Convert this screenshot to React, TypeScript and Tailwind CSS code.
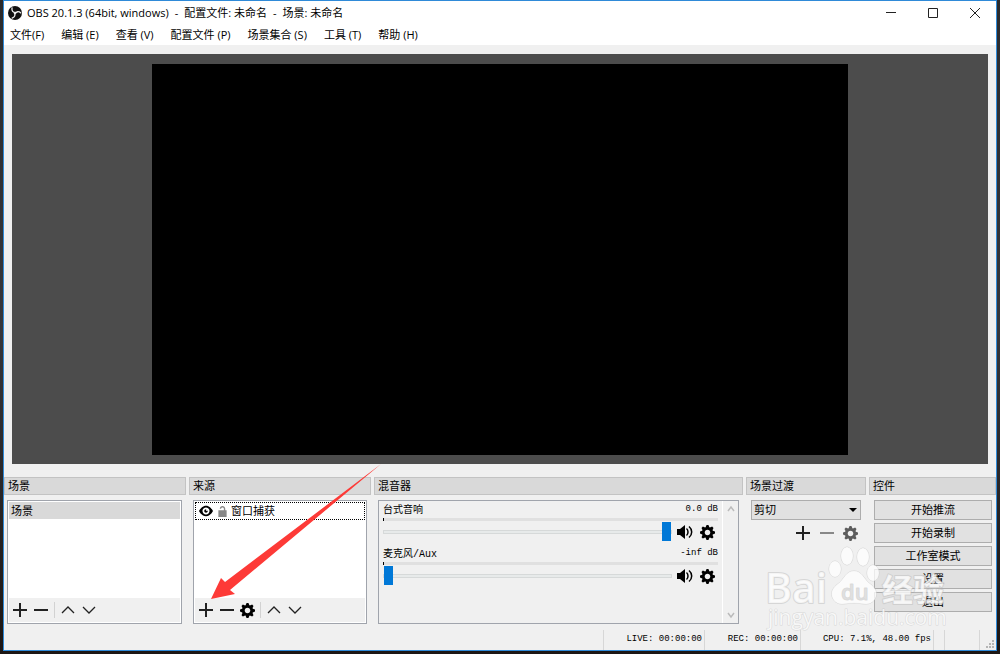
import type { ReactNode } from 'react';

const GLYPHS = {
  cog: 'M3.5 0l-.5 1.19c-.1.03-.19.08-.28.13l-1.19-.5-.72.72.5 1.19c-.05.1-.09.18-.13.28l-1.19.5v1l1.19.5c.04.1.08.18.13.28l-.5 1.19.72.72 1.19-.5c.09.04.18.09.28.13l.5 1.19h1l.5-1.19c.09-.04.19-.08.28-.13l1.19.5.72-.72-.5-1.19c.04-.09.09-.19.13-.28l1.19-.5v-1l-1.19-.5c-.03-.09-.08-.19-.13-.28l.5-1.19-.72-.72-1.19.5c-.09-.04-.19-.09-.28-.13l-.5-1.19h-1zm.5 2.5c.83 0 1.5.67 1.5 1.5s-.67 1.5-1.5 1.5-1.5-.67-1.5-1.5.67-1.5 1.5-1.5z',
  eye: 'M4.03 1c-2.53 0-4.03 3-4.03 3s1.5 3 4.03 3c2.47 0 3.97-3 3.97-3s-1.5-3-3.97-3zm-.03 1c1.11 0 2 .9 2 2 0 1.11-.89 2-2 2-1.1 0-2-.89-2-2 0-1.1.9-2 2-2zm0 1c-.55 0-1 .45-1 1s.45 1 1 1 1-.45 1-1c0-.1-.04-.19-.06-.28-.08.16-.24.28-.44.28-.28 0-.5-.22-.5-.5 0-.2.12-.36.28-.44-.09-.03-.18-.06-.28-.06z',
  unlock: 'M4 0c-1.1 0-2 .9-2 2h1c0-.56.44-1 1-1s1 .44 1 1v1h-4v5h6v-5h-1v-1c0-1.1-.9-2-2-2z',
};

const LINES = {
  plus: 'M8 1v14M1 8h14',
  minus: 'M1 8h14',
  up: 'M2 11l6-6 6 6',
  down: 'M2 5l6 6 6-6',
};

const Glyph = ({ name, className = 'size-[15px]' }: { name: keyof typeof GLYPHS; className?: string }) => (
  <svg viewBox="0 0 8 8" fill="currentColor" className={className}>
    <path d={GLYPHS[name]} />
  </svg>
);

const Line = ({ name, width = 2 }: { name: keyof typeof LINES; width?: number }) => (
  <svg viewBox="0 0 16 16" fill="none" stroke="currentColor" strokeWidth={width} className="size-4">
    <path d={LINES[name]} />
  </svg>
);

const Speaker = () => (
  <svg viewBox="0 0 16 16" fill="none" stroke="currentColor" strokeWidth="1.5" className="size-4">
    <path d="M0 5h3l5-4v14l-5-4H0z" fill="currentColor" stroke="none" />
    <path d="M9.5 4.5c2 1.5 2 5.500 0 7M12 2.500c3.600 3 3.600 8 0 11" />
  </svg>
);

type IconButtonProps = {
  label: string;
  children: ReactNode;
  className?: string;
};

const IconButton = ({ label, children, className = '' }: IconButtonProps) => (
  <button type="button" aria-label={label} className={`flex items-center justify-center ${className}`}>
    {children}
  </button>
);

const ObsLogo = () => (
  <svg viewBox="0 0 28 28" className="size-[14px]">
    <circle cx="14" cy="14" r="14" fill="#111" />
    <g fill="none" stroke="#f2f2f2" strokeWidth="2.600" strokeLinecap="round">
      <path d="M8 4c-1 6 2 9 7 9" />
      <path d="M8 4c-1 6 2 9 7 9" transform="rotate(120 14 14)" />
      <path d="M8 4c-1 6 2 9 7 9" transform="rotate(240 14 14)" />
    </g>
  </svg>
);

const TitleBar = () => (
  <header className="flex h-6 items-center bg-white pl-1">
    <ObsLogo />
    <h1 className="flex flex-1 gap-[6px] pl-[5px] text-[11px] whitespace-nowrap">
      <span>OBS 20.1.3 (64bit, windows)</span>
      <span>-</span>
      <span>配置文件: 未命名</span>
      <span>-</span>
      <span>场景: 未命名</span>
    </h1>
    <div className="flex text-[#222]">
      <IconButton label="最小化" className="h-6 w-[42px]">
        <svg viewBox="0 0 10 10" stroke="currentColor" className="size-[10px]">
          <path d="M0 4.5h10" />
        </svg>
      </IconButton>
      <IconButton label="最大化" className="h-6 w-[42px]">
        <svg viewBox="0 0 10 10" fill="none" stroke="currentColor" className="size-[10px]">
          <path d="M.5.5h9v9h-9z" />
        </svg>
      </IconButton>
      <IconButton label="关闭" className="h-6 w-[42px]">
        <svg viewBox="0 0 10 10" fill="none" stroke="currentColor" className="size-[10px]">
          <path d="M0 0l10 10M10 0L0 10" />
        </svg>
      </IconButton>
    </div>
  </header>
);

const MENUS = ['文件(F)', '编辑 (E)', '查看 (V)', '配置文件 (P)', '场景集合 (S)', '工具 (T)', '帮助 (H)'];

const MenuBar = () => (
  <nav className="flex h-5 items-center gap-[17px] bg-white pl-[6px] text-[11px]">
    {MENUS.map((item) => (
      <button key={item} type="button" className="whitespace-nowrap">
        {item}
      </button>
    ))}
  </nav>
);

type DockProps = {
  title: string;
  children: ReactNode;
  bodyClass?: string;
};

const Dock = ({ title, children, bodyClass = 'px-1' }: DockProps) => (
  <section className="relative flex min-w-0 flex-col">
    <h2 className="h-[18px] border border-[#c3c3c3] bg-[#d9d9d9] pl-[3px] text-[11px] leading-4">{title}</h2>
    <div className={`mt-[5px] flex-1 ${bodyClass}`}>{children}</div>
  </section>
);

type ListBoxProps = {
  children: ReactNode;
  settings?: boolean;
};

const ListBox = ({ children, settings = false }: ListBoxProps) => (
  <div className="flex h-[124px] flex-col border border-[#a0a4ac] bg-white p-px">
    <ul className="flex-1">{children}</ul>
    <div className="flex h-6 items-center gap-[5px] bg-[#f0f0f0] pl-[3px] text-[#222]">
      <IconButton label="添加"><Line name="plus" /></IconButton>
      <IconButton label="移除"><Line name="minus" /></IconButton>
      {settings && <IconButton label="属性" className="text-black"><Glyph name="cog" /></IconButton>}
      <span className="h-4 w-px bg-[#d2d2d2]" />
      <IconButton label="上移"><Line name="up" width={1.3} /></IconButton>
      <IconButton label="下移"><Line name="down" width={1.3} /></IconButton>
    </div>
  </div>
);

// long tapered pointer that ends on the "add source" button
const Arrow = () => (
  <svg viewBox="0 0 170 136" className="pointer-events-none absolute top-[-13px] left-[22px] z-10 h-[136px] w-[170px]">
    <path d="M0 135L10 114l4 4L170 0 19 126l5 4z" fill="#fd3a37" />
  </svg>
);

type ChannelProps = {
  id: string;
  name: string;
  level: string;
  value: number;
};

const Channel = ({ id, name, level, value }: ChannelProps) => (
  <div className="h-11">
    <div className="flex h-4 items-center justify-between">
      <label htmlFor={id} className="font-['Liberation_Mono','Noto_Sans_CJK_SC',monospace] text-[10px]">{name}</label>
      <output htmlFor={id} className="font-['Liberation_Mono',monospace] text-[9px]">{level}</output>
    </div>
    <div className="h-[3px] border-l border-black bg-[#e0e0e0]" />
    <div className="flex h-[22px] items-center">
      <input
        id={id}
        type="range"
        min={0}
        max={100}
        defaultValue={value}
        className="m-0 h-[19px] min-w-0 flex-1 appearance-none bg-transparent [&::-webkit-slider-runnable-track]:h-[4px] [&::-webkit-slider-runnable-track]:border [&::-webkit-slider-runnable-track]:border-[#d6d9d9] [&::-webkit-slider-runnable-track]:bg-[#e7eaea] [&::-webkit-slider-thumb]:-mt-[9px] [&::-webkit-slider-thumb]:h-[19px] [&::-webkit-slider-thumb]:w-[9px] [&::-webkit-slider-thumb]:appearance-none [&::-webkit-slider-thumb]:bg-[#0078d7]"
      />
      <IconButton label={`静音 ${name}`} className="ml-[5px]"><Speaker /></IconButton>
      <IconButton label={`设置 ${name}`} className="mr-[3px] ml-[7px]"><Glyph name="cog" /></IconButton>
    </div>
  </div>
);

const Mixer = () => (
  <div className="flex h-[124px] border border-[#a0a4ac]">
    <div className="min-w-0 flex-1 py-px pr-1 pl-1">
      <Channel id="desktop-audio" name="台式音响" level="0.0 dB" value={100} />
      <Channel id="mic-aux" name="麦克风/Aux" level="-inf dB" value={0} />
    </div>
    <div className="flex w-4 flex-col items-center justify-between border-l border-white py-1 text-[#bbb]">
      <svg viewBox="0 0 8 8" fill="none" stroke="currentColor" strokeWidth="1.5" className="size-2">
        <path d="M1 6l3-4 3 4" />
      </svg>
      <svg viewBox="0 0 8 8" fill="none" stroke="currentColor" strokeWidth="1.5" className="size-2">
        <path d="M1 2l3 4 3-4" />
      </svg>
    </div>
  </div>
);

const Transitions = () => (
  <>
    <div className="relative">
      <select
        aria-label="场景过渡"
        className="block h-5 w-full appearance-none border border-[#adadad] bg-[#e1e1e1] pl-[2px] text-[11px] leading-4"
      >
        <option>剪切</option>
      </select>
      <svg viewBox="0 0 8 4" className="pointer-events-none absolute top-2 right-1 h-1 w-2">
        <path d="M0 0h8L4 4z" />
      </svg>
    </div>
    <div className="mt-[5px] flex items-center justify-end gap-2 pr-[3px] text-[#222]">
      <IconButton label="添加转场"><Line name="plus" /></IconButton>
      <IconButton label="移除转场" className="text-[#888]"><Line name="minus" /></IconButton>
      <IconButton label="转场属性" className="text-[#5c5c5c]"><Glyph name="cog" /></IconButton>
    </div>
  </>
);

const CONTROLS = ['开始推流', '开始录制', '工作室模式', '设置', '退出'];

const StatusBar = () => (
  <footer className="mt-[6px] flex h-5 justify-end font-['Liberation_Mono',monospace] text-[9px] leading-[18px] whitespace-pre">
    <span className="w-[101px] border-l border-[#d7d7d7] pr-[2px] text-right">LIVE: 00:00:00</span>
    <span className="w-24 border-l border-[#d7d7d7] pr-[2px] text-right">REC: 00:00:00</span>
    <span className="w-[134px] border-x border-[#d7d7d7] pr-[2px] text-right">CPU: 7.1%, 48.00 fps</span>
    <span className="w-[11px] border-r border-[#d7d7d7]" />
    <span className="w-[35px] border-r border-[#d7d7d7]" />
    <span className="flex w-4 items-end justify-end pr-px pb-px">
      <svg viewBox="0 0 9 9" fill="#b5b5b5" className="size-[9px]">
        <path d="M6 0h2v2H6zM3 3h2v2H3zM6 3h2v2H6zM0 6h2v2H0zM3 6h2v2H3zM6 6h2v2H6z" />
      </svg>
    </span>
  </footer>
);

const Watermark = () => (
  <svg
    viewBox="0 0 184 90"
    className="pointer-events-none absolute right-[48px] bottom-[16px] z-10 h-[90px] w-[184px] font-['Open_Sans','Noto_Sans_CJK_SC',sans-serif]"
    fill="#fff"
    fillOpacity="0.75"
    stroke="#bdbdbd"
    strokeOpacity="0.5"
    strokeLinejoin="round"
    paintOrder="stroke"
  >
    <text x="1" y="59" fontSize="41" fontWeight="600" strokeWidth="2">Bai</text>
    <ellipse cx="71" cy="25" rx="6" ry="8" />
    <ellipse cx="83" cy="12" rx="6" ry="9" />
    <ellipse cx="99" cy="13" rx="6" ry="9" />
    <ellipse cx="109" cy="29" rx="6" ry="8" />
    <path d="M90 27c-8 0-10 8-15 12-7 5-9 10-6 16 5 8 13 4 21 4s16 4 21-4c3-6 1-11-6-16-5-4-7-12-15-12z" />
    <text x="77" y="56" fontSize="22" fontWeight="600" fill="#d8d8d8">du</text>
    <text x="118" y="57" fontSize="31" fontWeight="700" strokeWidth="2">经验</text>
    <text x="4" y="81" fontSize="21" strokeWidth="1">jingyan.baidu.com</text>
  </svg>
);

export default function App() {
  return (
    <div className="flex min-h-screen bg-linear-to-b from-[#2a2a2c] via-[#35363b] to-[#1c1614] px-[3px] pb-[3px] font-['Open_Sans','Noto_Sans_CJK_SC',sans-serif] text-black">
      <div className="relative flex min-w-0 flex-1 flex-col border border-[#2f8ad8] bg-[#f0f0f0]">
        <TitleBar />
        <MenuBar />
        <main className="flex flex-1 flex-col pt-[9px]">
          <div className="mx-2 flex flex-1 justify-center bg-[#4c4c4c] pt-[10px] pb-[9px]">
            <div className="aspect-video bg-black" />
          </div>
          <div className="mt-[13px] grid grid-cols-[182fr_182fr_369fr_120fr_127fr] gap-[3px]">
            <Dock title="场景" bodyClass="pr-1 pl-[3px]">
              <ListBox>
                <li className="h-[17px] bg-[#d9d9d9] pl-[2px] text-[11px] leading-[17px]">场景</li>
              </ListBox>
            </Dock>
            <Dock title="来源">
              <ListBox settings>
                <li className="flex h-[18px] items-center border border-dotted border-black pl-[3px] text-[11px]">
                  <Glyph name="eye" className="size-[14px]" />
                  <Glyph name="unlock" className="mr-[3px] ml-1 size-[11px] text-[#888]" />
                  窗口捕获
                </li>
              </ListBox>
              <Arrow />
            </Dock>
            <Dock title="混音器">
              <Mixer />
            </Dock>
            <Dock title="场景过渡" bodyClass="px-[5px]">
              <Transitions />
            </Dock>
            <Dock title="控件" bodyClass="flex flex-col gap-[3px] pr-1 pl-[5px]">
              {CONTROLS.map((label) => (
                <button key={label} type="button" className="h-5 border border-[#adadad] bg-[#e1e1e1] text-[11px] leading-4">
                  {label}
                </button>
              ))}
            </Dock>
          </div>
        </main>
        <StatusBar />
        <Watermark />
      </div>
    </div>
  );
}
